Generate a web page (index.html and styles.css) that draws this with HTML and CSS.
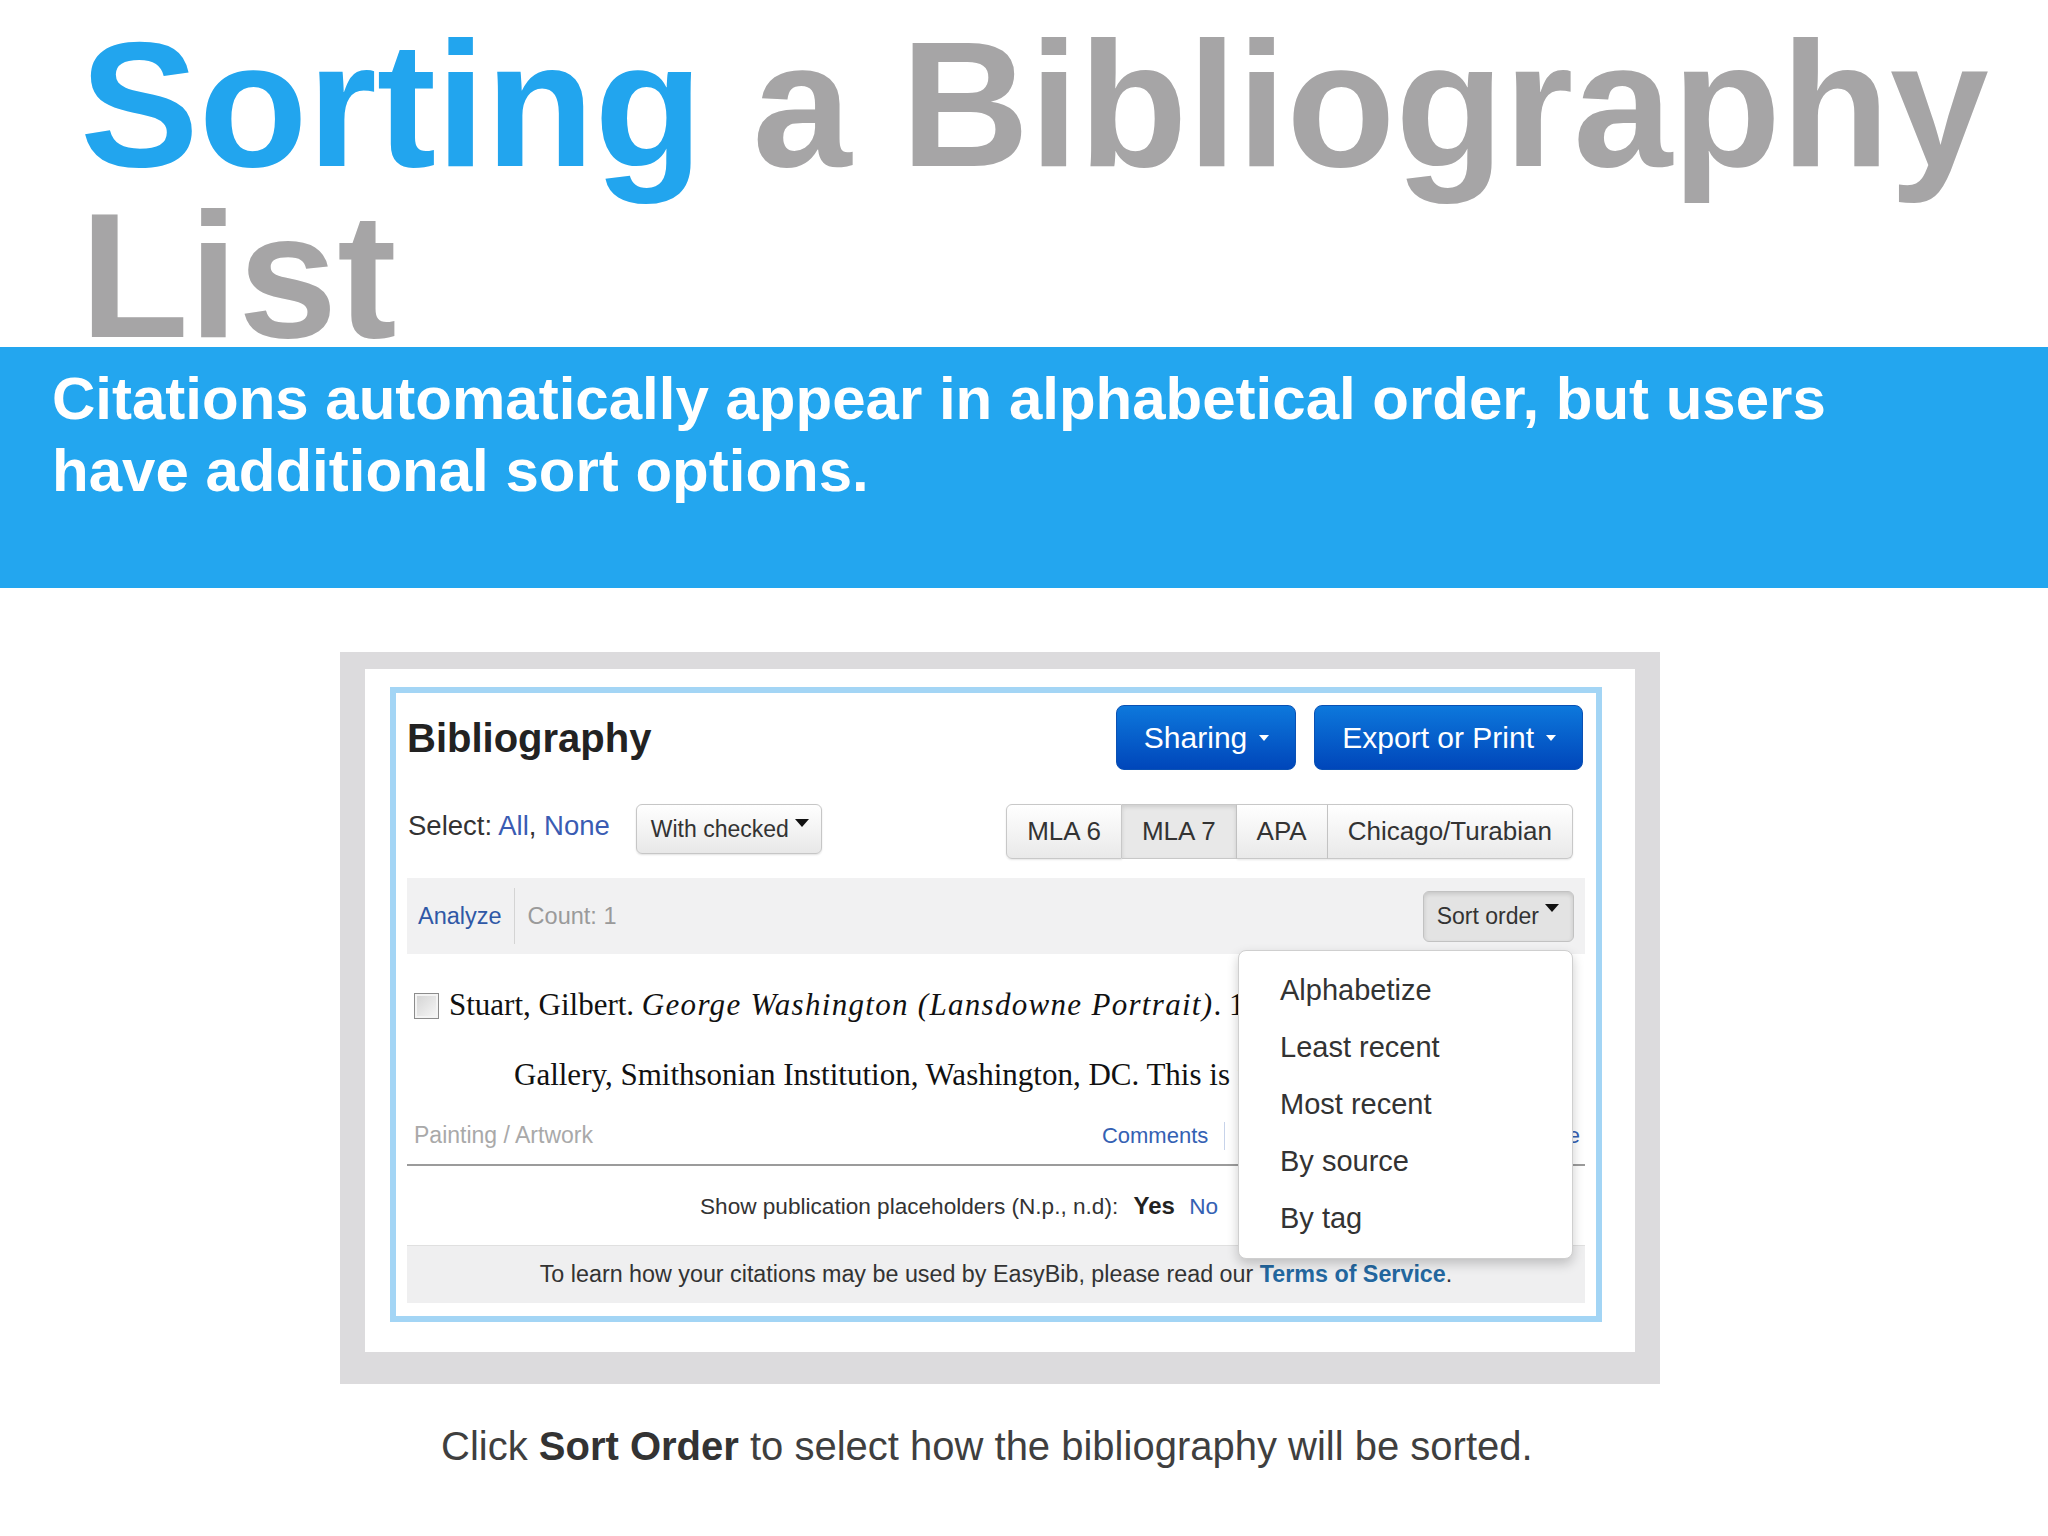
FILE: index.html
```html
<!DOCTYPE html>
<html lang="en">
<head>
<meta charset="utf-8">
<title>Sorting a Bibliography List</title>
<link rel="stylesheet" href="styles.css">
</head>
<body>
<header class="title-area">
  <h1 class="title"><span class="accent">Sorting</span> a Bibliography List</h1>
</header>
<section class="banner">
  <p>Citations automatically appear in alphabetical order, but users have additional sort options.</p>
</section>
<main class="shot-frame">
  <div class="shot">
    <div class="bib">
      <div class="bib-head">
        <h2>Bibliography</h2>
        <div class="actions">
          <button class="btn-primary">Sharing <span class="caret caret-white"></span></button>
          <button class="btn-primary">Export or Print <span class="caret caret-white"></span></button>
        </div>
      </div>
      <div class="bib-controls">
        <div class="select">Select: <a href="#">All</a>, <a href="#">None</a></div>
        <button class="btn-default with-checked">With checked <span class="caret caret-dark"></span></button>
        <div class="styles">
          <button class="tab first">MLA 6</button>
          <button class="tab active">MLA 7</button>
          <button class="tab">APA</button>
          <button class="tab last">Chicago/Turabian</button>
        </div>
      </div>
      <div class="toolbar">
        <a href="#" class="analyze">Analyze</a>
        <span class="count">Count: 1</span>
        <div class="sort-wrap">
          <button class="btn-default sort-btn">Sort order <span class="caret caret-dark"></span></button>
          <ul class="dropdown">
            <li>Alphabetize</li>
            <li>Least recent</li>
            <li>Most recent</li>
            <li>By source</li>
            <li>By tag</li>
          </ul>
        </div>
      </div>
      <div class="citation">
        <span class="checkbox"></span>
        <div class="cite-text">
          <div class="cite-line">Stuart, Gilbert. <i>George Washington (Lansdowne Portrait)</i>. 1796. National Portrait</div>
          <div class="cite-line cite-cont">Gallery, Smithsonian Institution, Washington, DC. This is not a real citation.</div>
        </div>
      </div>
      <div class="meta">
        <span class="type">Painting / Artwork</span>
        <div class="links">
          <a href="#">Comments</a>
          <a href="#">Tags</a>
          <a href="#">Duplicate</a>
          <a href="#">Edit</a>
          <a href="#">Delete</a>
        </div>
      </div>
      <div class="placeholders">Show publication placeholders (N.p., n.d): <b>Yes</b> <a href="#">No</a></div>
      <div class="terms">To learn how your citations may be used by EasyBib, please read our <a href="#">Terms of Service</a>.</div>
    </div>
  </div>
</main>
<p class="caption">Click <b>Sort Order</b> to select how the bibliography will be sorted.</p>
</body>
</html>
```
FILE: styles.css
```css
body {
  margin: 0;
  background: #ffffff;
  font-family: "Liberation Sans", Arial, sans-serif;
  width: 2048px;
}

a { text-decoration: none; }

button {
  font-family: "Liberation Sans", Arial, sans-serif;
  cursor: pointer;
}

/* ---------- Title ---------- */
.title-area {
  height: 347px;
  box-sizing: border-box;
  padding: 19px 0 0 80px;
}
.title {
  margin: 0;
  font-size: 178px;
  line-height: 171px;
  font-weight: 700;
  color: #a6a5a6;
}
.title .accent { color: #22a5ee; }

/* ---------- Banner ---------- */
.banner {
  height: 241px;
  box-sizing: border-box;
  background: #23a6ef;
  padding: 16px 146px 0 52px;
}
.banner p {
  margin: 0;
  color: #ffffff;
  font-size: 60px;
  line-height: 72px;
  font-weight: 700;
}

/* ---------- Screenshot frame ---------- */
.shot-frame {
  margin: 64px 0 0 340px;
  width: 1320px;
  box-sizing: border-box;
  padding: 17px 25px 32px;
  background: #dcdbdd;
}
.shot {
  background: #ffffff;
  padding: 18px 33px 30px 25px;
}
.bib {
  border: 6px solid #a3d5f5;
  padding: 12px 11px 13px;
  background: #ffffff;
  color: #333333;
}

/* header row */
.bib-head {
  display: flex;
  align-items: center;
  justify-content: space-between;
  height: 65px;
}
.bib-head h2 {
  margin: 0;
  font-size: 40px;
  line-height: 42px;
  font-weight: 700;
  color: #222222;
}
.actions {
  display: flex;
  gap: 18px;
  margin-right: 2px;
}
.btn-primary {
  height: 65px;
  display: flex;
  align-items: center;
  gap: 12px;
  padding: 0 26px 0 27px;
  border: 1px solid #0a51b4;
  border-radius: 8px;
  background: linear-gradient(#0d78dc, #0046ba);
  color: #ffffff;
  font-size: 30px;
}

.caret {
  display: inline-block;
  width: 0;
  height: 0;
}
.caret-white {
  border-left: 5px solid transparent;
  border-right: 5px solid transparent;
  border-top: 6px solid #ffffff;
}
.caret-dark {
  border-left: 7px solid transparent;
  border-right: 7px solid transparent;
  border-top: 8px solid #111111;
  align-self: flex-start;
  margin-top: 14px;
}

/* controls row */
.bib-controls {
  display: flex;
  align-items: flex-start;
  margin-top: 34px;
  height: 55px;
}
.select {
  font-size: 27.5px;
  line-height: 44px;
  color: #333333;
  margin-left: 1px;
}
.select a { color: #3a5cb3; }

.btn-default {
  display: flex;
  align-items: center;
  gap: 6px;
  border: 1px solid #c6c6c6;
  border-radius: 6px;
  background: linear-gradient(#ffffff, #e8e8e8);
  color: #333333;
  font-size: 23px;
  box-shadow: 0 1px 2px rgba(0, 0, 0, 0.12);
}
.with-checked {
  margin-left: 26px;
  height: 50px;
  padding: 0 12px 0 14px;
}

.styles {
  margin-left: auto;
  margin-right: 12px;
  display: flex;
}
.tab {
  height: 55px;
  padding: 0 20px;
  font-size: 26px;
  color: #333333;
  background: linear-gradient(#ffffff, #e9e9e9);
  border: 1px solid #c8c8c8;
  border-left: none;
  box-shadow: 0 1px 2px rgba(0, 0, 0, 0.1);
}
.tab.first {
  border-left: 1px solid #c8c8c8;
  border-radius: 6px 0 0 6px;
}
.tab.last { border-radius: 0 6px 6px 0; }
.tab.active {
  background: #e8e8e8;
  box-shadow: inset 0 2px 4px rgba(0, 0, 0, 0.12);
}

/* toolbar */
.toolbar {
  margin-top: 19px;
  height: 76px;
  box-sizing: border-box;
  background: #f1f1f2;
  display: flex;
  align-items: center;
  padding: 0 11px;
  font-size: 23.5px;
}
.analyze {
  color: #2f58a6;
  padding-right: 12px;
  border-right: 1px solid #d4d4d4;
  line-height: 56px;
}
.count {
  padding-left: 13px;
  color: #9a9a9a;
}
.sort-wrap {
  margin-left: auto;
  position: relative;
}
.sort-btn {
  height: 51px;
  padding: 0 14px 0 13px;
  gap: 6px;
  font-size: 23px;
  background: #e3e3e3;
  border-color: #c2c2c2;
  box-shadow: inset 0 2px 4px rgba(0, 0, 0, 0.13);
}
.sort-btn .caret-dark { margin-top: 12px; }

.dropdown {
  position: absolute;
  top: 59px;
  right: 1px;
  width: 335px;
  box-sizing: border-box;
  margin: 0;
  padding: 11px 0 11px 41px;
  list-style: none;
  background: #ffffff;
  border: 1px solid #cfcfcf;
  border-radius: 8px;
  box-shadow: 0 5px 12px rgba(0, 0, 0, 0.2);
  z-index: 10;
}
.dropdown li {
  font-size: 29px;
  line-height: 57px;
  color: #333333;
}

/* citation */
.citation {
  display: flex;
  align-items: flex-start;
  margin-top: 15.5px;
  padding: 0 20px 0 7px;
}
.checkbox {
  flex: none;
  width: 25px;
  height: 26px;
  margin: 23px 10px 0 0;
  box-sizing: border-box;
  border: 1px solid #8c8c8c;
  background: linear-gradient(135deg, #d2d2d2, #f8f8f8);
  box-shadow: inset 0 0 0 2px #f4f4f4;
}
.cite-text {
  flex: 1;
  min-width: 0;
  overflow: hidden;
  font-family: "Liberation Serif", "Times New Roman", serif;
  font-size: 31px;
  line-height: 70px;
  color: #111111;
  white-space: nowrap;
}
.cite-text i { letter-spacing: 1.3px; }
.cite-cont { padding-left: 65px; }

.meta {
  display: flex;
  align-items: center;
  justify-content: space-between;
  padding: 4px 5px 6.5px 7px;
  height: 44px;
  font-size: 23px;
  border-bottom: 2px solid #9b9b9b;
}
.type { color: #a9a9a9; }
.links { display: flex; align-items: center; font-size: 22px; }
.links a {
  color: #3461b3;
  padding: 0 16px;
  line-height: 28px;
  border-left: 1px solid #c7d3ea;
}
.links a:first-child { border-left: none; padding-left: 0; }
.links a:last-child { padding-right: 0; }

.placeholders {
  height: 79px;
  line-height: 79px;
  font-size: 22.6px;
  color: #333333;
  padding-left: 293px;
}
.placeholders b { margin-left: 9px; font-size: 24px; color: #222222; }
.placeholders a { margin-left: 8px; color: #3461b3; }

.terms {
  height: 58px;
  line-height: 57px;
  box-sizing: border-box;
  text-align: center;
  font-size: 23.3px;
  color: #333333;
  background: #efeff0;
  border-top: 1px solid #e0e0e0;
}
.terms a { color: #23679f; font-weight: 700; }

/* caption */
.caption {
  margin: 40px 0 0 441px;
  font-size: 40px;
  color: #3f3f3f;
}
.caption b { color: #333333; }
```
